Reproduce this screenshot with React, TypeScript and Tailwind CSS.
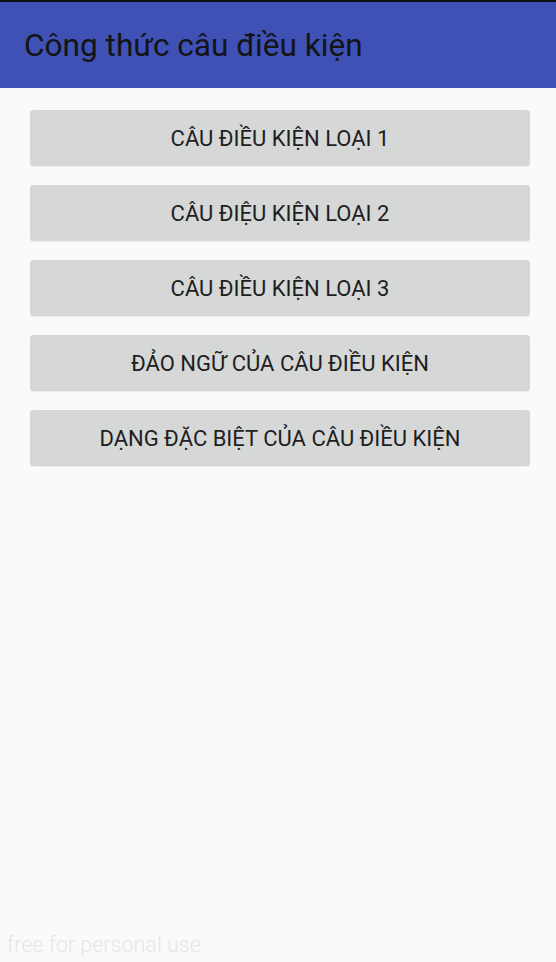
import React from 'react';

const items = [
  'CÂU ĐIỀU KIỆN LOẠI 1',
  'CÂU ĐIỆU KIỆN LOẠI 2',
  'CÂU ĐIỀU KIỆN LOẠI 3',
  'ĐẢO NGỮ CỦA CÂU ĐIỀU KIỆN',
  'DẠNG ĐẶC BIỆT CỦA CÂU ĐIỀU KIỆN',
];

const App = () => {
  return (
    <div className="relative flex h-[962px] w-[556px] flex-col bg-[#fafafa] font-['Roboto',sans-serif]">
      <div className="h-[2px] bg-[#111]" />
      <div className="flex h-[86px] items-center bg-[#3f51b5] pl-[24px]">
        <h1 className="text-[31.6px] leading-none text-[#141414] pt-[2px]">Công thức câu điều kiện</h1>
      </div>
      <div className="flex flex-col gap-[19px] pl-[30px] pr-[26px] pt-[22px]">
        {items.map((label) => (
          <button
            key={label}
            className="flex h-[56px] items-center justify-center rounded-[3px] bg-[#d6d7d7] text-[22px] text-[#1e1e1e] shadow-[0_1px_1px_rgba(0,0,0,0.06)]"
          >
            {label}
          </button>
        ))}
      </div>
      <div className="absolute bottom-[1px] left-[7px] text-[21.5px] font-light text-[#e6e6e6]">
        free for personal use
      </div>
    </div>
  );
};

export default App;
